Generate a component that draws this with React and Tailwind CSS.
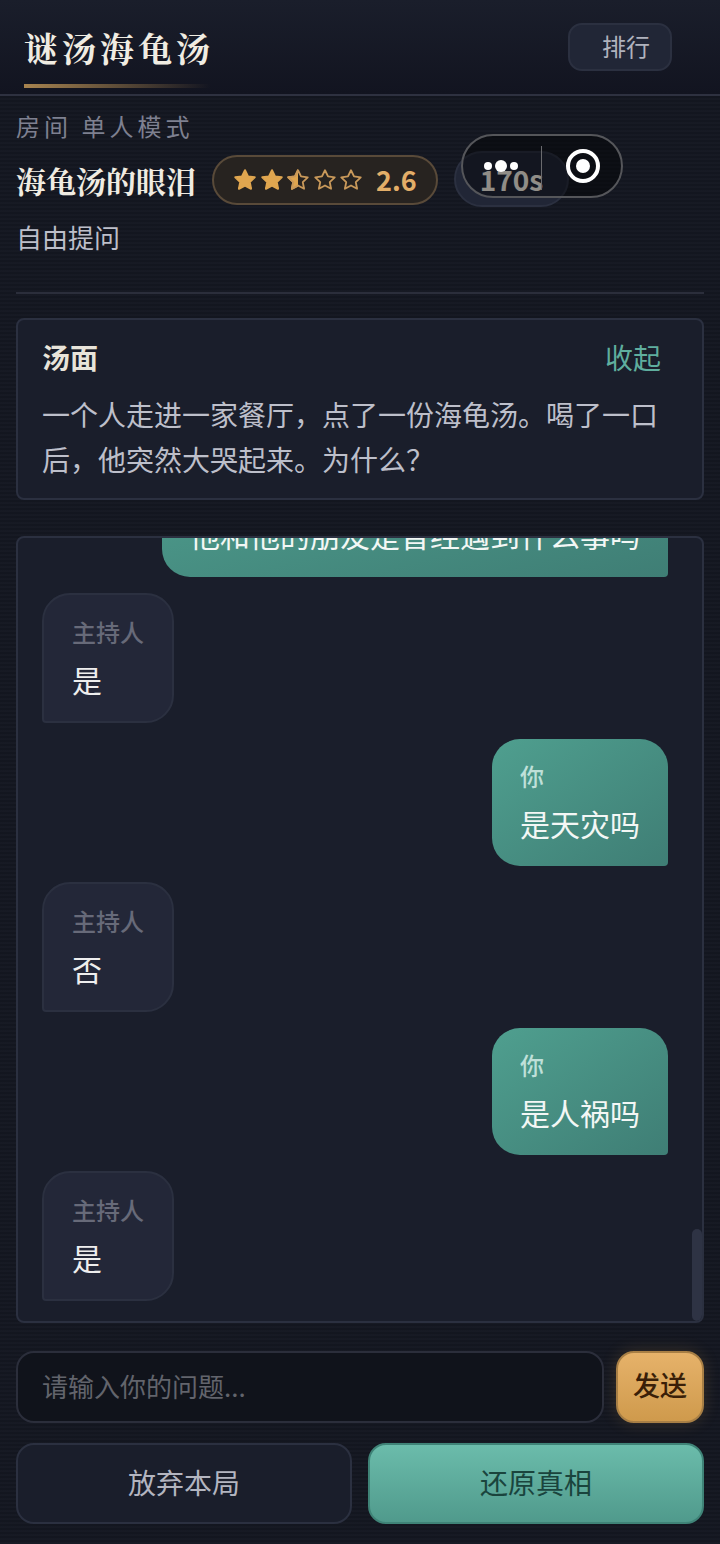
import React from "react";

const SANS = "font-['Noto_Sans_CJK_SC','Noto_Sans',sans-serif]";
const SERIF = "font-['Noto_Serif_CJK_SC','Noto_Serif_SC','Noto_Sans_CJK_SC',serif]";

const messages = [
  { role: "user", text: "他和他的朋友是曾经遇到什么事吗" },
  { role: "host", text: "是" },
  { role: "user", text: "是天灾吗" },
  { role: "host", text: "否" },
  { role: "user", text: "是人祸吗" },
  { role: "host", text: "是" },
];

// 评分星星：full / half / empty
function Star({ type }) {
  const d = "M12 3l2.8 5.7 6.2.8-4.6 4.4 1.2 6.2L12 17.1 6.4 20.1l1.2-6.2L3 9.5l6.2-.8z";
  return (
    <svg width="26" height="26" viewBox="0 0 24 24" className="block">
      <defs>
        <clipPath id="half-star">
          <rect x="0" y="0" width="12" height="24" />
        </clipPath>
      </defs>
      {type === "full" ? (
        <path d={d} fill="#e0a64f" stroke="#e0a64f" strokeWidth="1.8" strokeLinejoin="round" />
      ) : null}
      {type === "half" ? (
        <path d={d} fill="#e0a64f" stroke="#e0a64f" strokeWidth="1.8" strokeLinejoin="round" clipPath="url(#half-star)" />
      ) : null}
      {type !== "full" ? <path d={d} fill="none" stroke="#c9995a" strokeWidth="1.7" strokeLinejoin="round" /> : null}
    </svg>
  );
}

function HostBubble({ text }) {
  return (
    <div className="self-start shrink-0 w-[132px] h-[130px] border-2 border-[#2b3040] bg-[#232738] rounded-[28px] rounded-bl-[4px] pl-[28px] pt-[21px]">
      <div className="text-[24px] leading-[32px] font-medium text-[#676a79]">主持人</div>
      <div className="text-[30px] leading-[40px] mt-[11px] text-[#eeeeee]">{text}</div>
    </div>
  );
}

function UserBubble({ text }) {
  return (
    <div className="self-end shrink-0 h-[127px] bg-linear-to-br from-[#4f9f8f] to-[#3f7e75] rounded-[28px] rounded-br-[4px] px-[28px] pt-[21px]">
      <div className="text-[24px] leading-[32px] font-medium text-[#bfe0d9]">你</div>
      <div className="text-[30px] leading-[40px] mt-[11px] text-[#f3f7f5] whitespace-nowrap">{text}</div>
    </div>
  );
}

export default function App() {
  return (
    <div className={`${SANS} relative w-[720px] h-[1544px] overflow-hidden bg-[#141721] bg-[repeating-linear-gradient(0deg,rgba(255,255,255,0.012)_0px,rgba(255,255,255,0.012)_2px,rgba(0,0,0,0.05)_2px,rgba(0,0,0,0.05)_4px)]`}>
      {/* 头部 */}
      <header className="h-[96px] border-b-2 border-[#2e3140] bg-linear-to-b from-[#1a1e2b] to-[#121420] flex items-start justify-between pl-[24px] pr-[48px]">
        <div className="w-[186px]">
          <div className={`${SERIF} text-[34px] leading-[48px] mt-[24px] tracking-[4px] font-bold text-[#f0ece2] whitespace-nowrap`}>谜汤海龟汤</div>
          <div className="h-[4px] mt-[12px] bg-linear-to-r from-[#a8844f] to-transparent" />
        </div>
        <div className="mt-[23px] w-[104px] h-[48px] rounded-[14px] border-2 border-[#2b3040] bg-[#212636] text-[24px] leading-[42px] text-[#b0b2bd] pl-[32px]">排行</div>
      </header>

      <div className="px-[16px]">
        {/* 房间信息 */}
        <div className="text-[24px] leading-[32px] mt-[14px] tracking-[4px] text-[#7e8090]">房间 单人模式</div>
        <div className="flex items-center mt-[13px] h-[50px]">
          <div className={`${SERIF} text-[30px] leading-[50px] font-bold text-[#f0ece2] whitespace-nowrap`}>海龟汤的眼泪</div>
          <div className="ml-[16px] w-[226px] h-[50px] rounded-full border-2 border-[#594a39] bg-[#272320] flex items-center pl-[18px]">
            <div className="flex gap-[0.5px]">
              <Star type="full" />
              <Star type="full" />
              <Star type="half" />
              <Star type="empty" />
              <Star type="empty" />
            </div>
            <span className="ml-[12px] text-[27px] leading-[44px] font-semibold text-[#e3ae68]">2.6</span>
          </div>
          <div className="ml-[16px] w-[115px] h-[56px] -mt-[2px] rounded-full border-2 border-[#2b3040] bg-[#212636] text-[28px] leading-[52px] font-semibold text-[#f0ece2] text-center">170s</div>
        </div>
        <div className="text-[26px] leading-[40px] mt-[12px] text-[#bdbfca]">自由提问</div>
        <div className="h-[2px] bg-[#2b2e3b] mt-[35px]" />

        {/* 汤面 */}
        <section className="mt-[24px] h-[182px] border-2 border-[#2b3040] rounded-[8px] bg-[#1a1e2b] px-[24px] pt-[19px]">
          <div className="flex justify-between pr-[17px] h-[36px] items-center">
            <span className="text-[28px] font-semibold text-[#e8e4da]">汤面</span>
            <span className="text-[28px] text-[#5fae9e]">收起</span>
          </div>
          <p className="text-[28px] leading-[45px] mt-[17px] text-[#bdbfca]">一个人走进一家餐厅，点了一份海龟汤。喝了一口后，他突然大哭起来。为什么？</p>
        </section>

        {/* 对话区 */}
        <section className="relative mt-[36px] h-[787px] border-2 border-[#2b3040] rounded-[8px] bg-[#1a1e2b] overflow-hidden flex flex-col justify-end gap-[16px] pl-[24px] pr-[34px] pb-[20px]">
          {messages.map((m, i) =>
            m.role === "host" ? <HostBubble key={i} text={m.text} /> : <UserBubble key={i} text={m.text} />
          )}
          <div className="absolute right-0 bottom-0 w-[10px] h-[92px] rounded-full bg-[#2e3344]" />
        </section>

        {/* 输入区 */}
        <div className="flex gap-[12px] mt-[28px]">
          <div className="flex-1 h-[72px] rounded-[18px] border-2 border-[#2b2e3b] bg-[#10131b] text-[26px] leading-[66px] pl-[24px] text-[#62646c]">请输入你的问题...</div>
          <div className="w-[88px] h-[72px] rounded-[18px] border-2 border-[#a87f45] bg-linear-to-b from-[#e6b26a] to-[#cf9a4c] text-[27px] leading-[64px] font-medium text-center text-[#3a1f08] shadow-[0_0_16px_rgba(224,166,79,0.18)]">发送</div>
        </div>
        <div className="flex gap-[16px] mt-[20px]">
          <div className="flex-1 h-[81px] rounded-[18px] border-2 border-[#2b3040] bg-[#1a1e2b] text-[28px] leading-[75px] text-center text-[#b3b5c0]">放弃本局</div>
          <div className="flex-1 h-[81px] rounded-[18px] border-2 border-[#3f8377] bg-linear-to-b from-[#6bbcab] to-[#509a8c] text-[28px] leading-[75px] text-center text-[#1a443d]">还原真相</div>
        </div>
      </div>

      {/* 小程序胶囊 */}
      <div className="absolute left-[461px] top-[134px] w-[162px] h-[64px] rounded-full border-2 border-[#55565a] bg-[rgba(0,0,0,0.4)]">
        <div className="absolute left-[21px] top-[26px] w-[8px] h-[8px] rounded-full bg-white" />
        <div className="absolute left-[32px] top-[24px] w-[12px] h-[12px] rounded-full bg-white" />
        <div className="absolute left-[47px] top-[26px] w-[8px] h-[8px] rounded-full bg-white" />
        <div className="absolute left-[78px] top-[10px] w-[1px] h-[44px] bg-[#6a6a6e]" />
        <div className="absolute left-[103px] top-[13px] w-[34px] h-[34px] rounded-full border-[4px] border-white flex items-center justify-center">
          <div className="w-[14px] h-[14px] rounded-full bg-white" />
        </div>
      </div>
    </div>
  );
}
